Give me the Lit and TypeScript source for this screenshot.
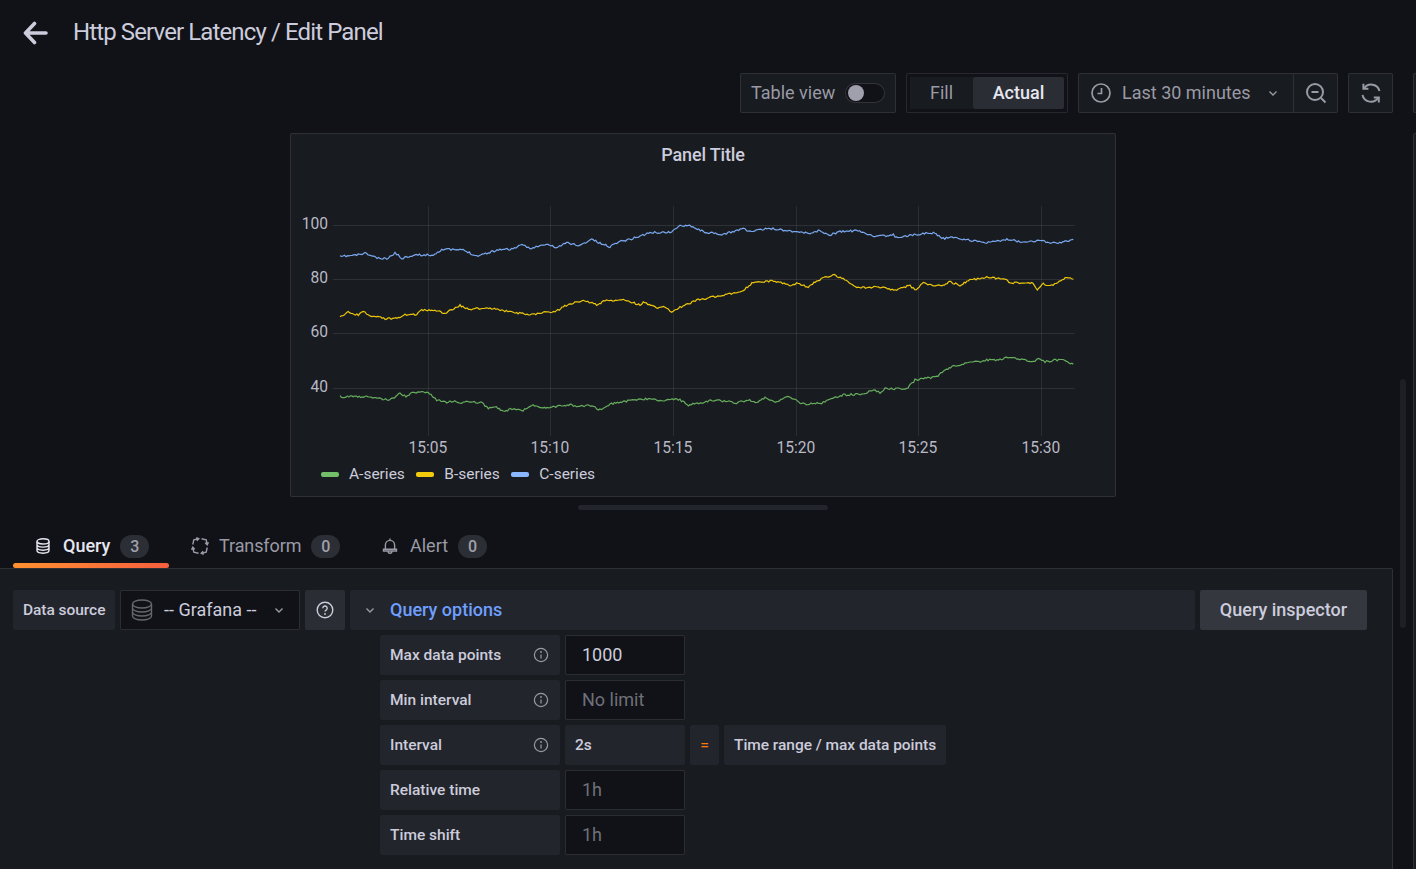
import {LitElement, html, css, svg} from 'lit';
import {customElement} from 'lit/decorators.js';

type Pt = [number, number];

// traced from the reference in page pixels, the chart svg uses the same coordinates
const fromZoom = (ox: number, pts: number[][]): Pt[] => pts.map(([x, y]) => [ox + x / 3, 200 + y / 3]);

const BLUE: Pt[] = [
    ...fromZoom(290, [[150,170],[200,165],[225,160],[270,177],[295,175],[315,158],[335,175],[370,165],[430,165],[455,148],[520,150],[560,168],[630,148],[660,148],[700,135],[720,145],[770,133],[800,143],[830,128],[870,137],[905,117],[930,130],[960,140],[985,125],[1020,118],[1050,108],[1080,98],[1140,97],[1160,85]]),
    ...fromZoom(680, [[0,78],[25,74],[70,95],[125,105],[190,85],[210,95],[270,85],[350,95],[390,100],[415,92],[450,105],[480,95],[530,92],[590,110],[640,105],[650,112],[720,102],[760,98],[790,115],[825,112],[860,120],[925,128],[985,118],[1020,125],[1075,122],[1130,130],[1180,118]]),
];
const YELLOW: Pt[] = [
    ...fromZoom(290, [[150,353],[175,337],[205,345],[220,335],[240,347],[290,357],[330,352],[345,343],[375,345],[395,330],[430,330],[465,340],[510,317],[540,327],[600,325],[680,338],[720,345],[760,336],[795,335],[820,320],[850,308],[880,300],[920,315],[945,303],[1000,297],[1020,305],[1050,315],[1060,305],[1095,322],[1125,322],[1145,337]]),
    ...fromZoom(680, [[0,322],[50,300],[145,283],[190,270],[220,247],[285,243],[330,258],[350,250],[385,262],[410,242],[458,224],[490,235],[530,262],[600,262],[650,270],[690,256],[705,270],[730,250],[785,258],[810,245],[840,257],[865,240],[925,232],[965,235],[995,248],[1055,248],[1072,268],[1090,252],[1115,256],[1160,232],[1180,238]]),
];
const GREEN: Pt[] = [
    ...fromZoom(290, [[150,590],[230,590],[300,600],[330,580],[348,590],[370,577],[415,578],[440,600],[470,607],[490,603],[515,610],[535,603],[575,608],[595,624],[615,620],[640,634],[670,625],[695,633],[725,615],[750,623],[780,623],[810,618],[840,615],[860,620],[905,616],[925,630],[960,612],[1000,605],[1040,598],[1080,597],[1110,603],[1160,597]]),
    ...fromZoom(680, [[0,600],[25,615],[105,600],[170,608],[205,600],[230,610],[255,593],[290,607],[315,590],[340,595],[365,612],[425,610],[440,600],[490,585],[550,582],[580,570],[600,577],[615,566],[680,566],[705,540],[735,535],[770,530],[795,510],[825,497],[855,490],[875,484],[905,487],[920,480],[960,480],[975,471],[1010,477],[1060,485],[1075,477],[1095,485],[1145,478],[1180,493]]),
];

function seriesPath(pts: Pt[], seed: number) {
    let s = seed;
    const rnd = () => {
        s = (s * 16807) % 2147483647;
        return s / 2147483647 - 0.5;
    };
    const out: string[] = [];
    for (let i = 0; i < pts.length - 1; i++) {
        const [x0, y0] = pts[i];
        const [x1, y1] = pts[i + 1];
        const steps = Math.max(1, Math.round((x1 - x0) / 1.5));
        for (let k = 0; k < steps; k++) {
            const t = k / steps;
            const y = y0 + (y1 - y0) * t + rnd() * 2;
            out.push(`${(x0 + (x1 - x0) * t).toFixed(1)},${y.toFixed(1)}`);
        }
    }
    const [lx, ly] = pts[pts.length - 1];
    out.push(`${lx.toFixed(1)},${ly.toFixed(1)}`);
    return 'M' + out.join('L');
}

const X_TICKS: [number, string][] = [[428.5, '15:05'], [550.5, '15:10'], [673.5, '15:15'], [796.5, '15:20'], [918.5, '15:25'], [1041.5, '15:30']];
const Y_TICKS: [number, string][] = [[225, '100'], [279, '80'], [333, '60'], [388, '40']];

const dbIcon = html`<svg class="ic" viewBox="0 0 16 16"><g fill="none" stroke="currentColor" stroke-width="1.4"><ellipse cx="8" cy="3.4" rx="6" ry="2.6"/><path d="M2 3.4v9.2C2 14 4.7 15.2 8 15.2s6-1.2 6-2.6V3.4M2 6.5c0 1.4 2.7 2.6 6 2.6s6-1.2 6-2.6M2 9.6c0 1.4 2.7 2.6 6 2.6s6-1.2 6-2.6"/></g></svg>`;
const transformIcon = html`<svg class="ic wide" viewBox="0 0 18 18"><g fill="none" stroke="currentColor" stroke-width="1.4"><path d="M1.8 7.5L2.8 2.8 7.5 1.8M5.3.6l2.5 1.2-2 2"/><path d="M10.5 1.800l4.700 1 1 4.700M17.400 5.300l-1.200 2.500-2-2"/><path d="M16.200 10.500l-1 4.700-4.700 1M12.700 17.400l-2.500-1.200 2-2"/><path d="M7.500 16.200l-4.700-1-1-4.700M.6 12.700l1.200-2.500 2 2"/></g></svg>`;
const bellIcon = html`<svg class="ic" viewBox="0 0 16 16"><g fill="none" stroke="currentColor" stroke-width="1.4"><path d="M8 .6v1.800M3.400 11V7a4.600 4.600 0 0 1 9.200 0v4M1.500 11.200h13v1.800h-13zM6 13c0 1.200.9 2.300 2 2.300s2-1.100 2-2.300"/></g></svg>`;
const infoIcon = html`<svg class="ic-info" viewBox="0 0 16 16"><g fill="none" stroke="currentColor" stroke-width="1.2"><circle cx="8" cy="8" r="6.6"/><path d="M8 7.400v4"/></g><circle cx="8" cy="5" r=".9" fill="currentColor"/></svg>`;
const chevron = html`<svg class="chev" viewBox="0 0 12 12"><path d="M2.500 4.500L6 8l3.500-3.500" fill="none" stroke="currentColor" stroke-width="1.4"/></svg>`;

@customElement('app-root')
export class AppRoot extends LitElement {
    static styles = css`
        :host {
            display: block;
            width: 1416px;
            height: 869px;
            position: relative;
            overflow: hidden;
            background: #111217;
            color: #ccccdc;
            font-family: Roboto, "Liberation Sans", sans-serif;
        }

        .head {
            display: flex;
            align-items: center;
            height: 65px;
            padding-left: 23px;
        }

        .back {
            width: 25px;
            height: 24px;
            margin-right: 25px;
        }

        .head h1 {
            margin: 0 0 2px;
            font-size: 24px;
            font-weight: 400;
            letter-spacing: -0.88px;
        }

        .tx {
            margin-bottom: 2px;
        }

        .toolbar {
            display: flex;
            gap: 10px;
            height: 40px;
            margin: 8px 0 20px 740px;
            width: 800px;
            color: #9a9aa6;
            font-size: 18px;
        }

        .box {
            display: flex;
            flex: none;
            align-items: center;
            box-sizing: border-box;
            background: #181b1f;
            border: 1px solid rgba(204, 204, 220, 0.12);
            border-radius: 2px;
        }

        .tableview {
            width: 156px;
            padding-left: 10px;
        }

        .switch {
            position: relative;
            box-sizing: border-box;
            width: 40px;
            height: 20px;
            margin-left: 10px;
            background: #111217;
            border: 1px solid rgba(204, 204, 220, 0.18);
            border-radius: 10px;
        }

        .switch::after {
            content: "";
            position: absolute;
            left: 2px;
            top: 1px;
            width: 16px;
            height: 16px;
            border-radius: 50%;
            background: #9fa0ab;
        }

        .radio {
            width: 162px;
            padding: 3px;
            background: #111217;
        }

        .radio span {
            display: flex;
            align-items: center;
            justify-content: center;
            box-sizing: border-box;
            height: 32px;
            padding-bottom: 2px;
        }

        .fill {
            width: 63px;
            background: #181b1f;
        }

        .actual {
            width: 91px;
            background: #2a2d33;
            border-radius: 2px;
            color: #e6e6f0;
            font-weight: 500;
        }

        .timegroup {
            width: 260px;
        }

        .range {
            display: flex;
            align-items: center;
            flex: none;
            width: 215px;
            height: 100%;
            padding-left: 12px;
            box-sizing: border-box;
            border-right: 1px solid rgba(204, 204, 220, 0.12);
        }

        .range .clock {
            flex: none;
            width: 20px;
            height: 20px;
            margin-right: 11px;
        }

        .range .chev {
            width: 12px;
            height: 12px;
            margin-left: 16px;
        }

        .tool-ic {
            width: 22px;
            height: 22px;
            margin: auto;
        }

        .refresh {
            width: 45px;
        }

        .stub {
            width: 40px;
            margin-left: 10px;
        }

        .body {
            display: flex;
        }

        .main {
            flex: none;
            width: 1393px;
        }

        .side {
            flex: none;
            box-sizing: border-box;
            width: 100px;
            height: 760px;
            margin-left: 20px;
            background: #181b1f;
            border: 1px solid rgba(204, 204, 220, 0.12);
            border-radius: 2px;
        }

        .panel {
            display: flex;
            flex-direction: column;
            box-sizing: border-box;
            width: 826px;
            height: 364px;
            margin-left: 290px;
            background: #181b1f;
            border: 1px solid rgba(204, 204, 220, 0.12);
            border-radius: 2px;
        }

        .panel-title {
            height: 66px;
            padding-top: 9px;
            box-sizing: border-box;
            text-align: center;
            font-size: 18px;
            line-height: 24px;
            font-weight: 500;
            letter-spacing: -0.15px;
        }

        .chart {
            display: block;
            flex: none;
        }

        .chart text {
            font-size: 15.6px;
            fill: #b9b9c6;
        }

        .legend {
            display: flex;
            align-items: center;
            gap: 11.5px;
            padding: 5px 0 0 30px;
            font-size: 15.5px;
            line-height: 18px;
        }

        .legend div {
            display: flex;
            align-items: center;
            gap: 10px;
        }

        .legend i {
            width: 18px;
            height: 5px;
            border-radius: 2px;
        }

        .handle {
            width: 250px;
            height: 5px;
            margin: 8px 0 0 578px;
            background: #22252b;
            border-radius: 3px;
        }

        .tabs {
            display: flex;
            height: 58px;
            padding-left: 13px;
            box-sizing: border-box;
            align-items: flex-end;
        }

        .tab {
            position: relative;
            display: flex;
            flex: none;
            align-items: center;
            height: 38px;
            padding: 0 0 7px 22px;
            box-sizing: border-box;
            font-size: 18px;
            color: #9a9aa6;
        }

        .tab.active {
            width: 156px;
            color: #e6e6f0;
            font-weight: 500;
        }

        .tab.mid {
            width: 191px;
            letter-spacing: -0.1px;
        }

        .tab.active::after {
            content: "";
            position: absolute;
            left: 0;
            right: 0;
            bottom: 0;
            height: 5px;
            border-radius: 3px;
            background: linear-gradient(90deg, #ff9030, #f55f3e);
        }

        .ic {
            flex: none;
            width: 16px;
            height: 16px;
            margin-right: 12px;
        }

        .ic.wide {
            width: 18px;
            height: 18px;
            margin-right: 10px;
        }

        .badge {
            display: flex;
            align-items: center;
            justify-content: center;
            width: 29px;
            height: 23px;
            margin: 2px 0 0 10px;
            border-radius: 12px;
            background: #2b2e34;
            color: #a0a0ac;
            font-size: 16px;
            font-weight: 500;
        }

        .editor {
            box-sizing: border-box;
            height: 320px;
            padding: 21px 25px 0 13px;
            background: #181b1f;
            border: solid rgba(204, 204, 220, 0.12);
            border-width: 1px 1px 0 0;
            border-radius: 0 2px 0 0;
        }

        .row {
            display: flex;
            gap: 5px;
            height: 40px;
        }

        .rows {
            display: flex;
            flex-direction: column;
            gap: 5px;
            margin: 5px 0 0 367px;
        }

        .cell {
            display: flex;
            flex: none;
            align-items: center;
            box-sizing: border-box;
            padding: 0 10px;
            background: #22252b;
            border-radius: 2px;
            font-size: 15.5px;
            font-weight: 500;
            white-space: nowrap;
        }

        .ds-label {
            width: 102px;
            letter-spacing: -0.05px;
        }

        .select {
            width: 180px;
            padding: 0 14px 0 10px;
            background: #111217;
            border: 1px solid rgba(204, 204, 220, 0.15);
            font-size: 18px;
            font-weight: 400;
        }

        .select .stack {
            flex: none;
            width: 22px;
            height: 22px;
            margin-right: 11px;
            color: #66666c;
        }

        .select .chev {
            width: 12px;
            height: 12px;
            margin-left: auto;
            color: #9a9aa6;
        }

        .help {
            justify-content: center;
            width: 40px;
            padding: 0;
            background: #2a2d33;
        }

        .help svg {
            width: 18px;
            height: 18px;
        }

        .options {
            flex: 1;
            padding-left: 14px;
            color: #6e9fff;
            font-size: 18px;
        }

        .options .chev {
            width: 12px;
            height: 12px;
            margin-right: 14px;
            color: #9a9aa6;
        }

        .inspector {
            justify-content: center;
            width: 167px;
            padding: 0 0 2px;
            background: #34373e;
            font-size: 18px;
        }

        .label {
            justify-content: space-between;
            width: 180px;
            padding-right: 11px;
        }

        .ic-info {
            width: 16px;
            height: 16px;
            color: #9a9aa6;
        }

        .input {
            width: 120px;
            padding: 0 16px 2px;
            background: #111217;
            border: 1px solid rgba(204, 204, 220, 0.15);
            font-size: 18px;
            font-weight: 400;
        }

        .input.empty {
            color: #6f7079;
        }

        .static {
            width: 120px;
        }

        .eq {
            justify-content: center;
            width: 29px;
            padding: 0;
            color: #ff780a;
        }

        .calc {
            letter-spacing: -0.04px;
        }

        .scroll {
            position: absolute;
            left: 1400px;
            top: 379px;
            width: 6px;
            height: 249px;
            border-radius: 3px;
            background: #1c1f24;
        }
    `;

    renderChart() {
        return html`
            <svg class="chart" width="824" height="260" viewBox="291 200 824 260">
                ${Y_TICKS.map(([y, label]) => svg`
                    <path d="M333 ${y + 0.5}H1074.5" stroke="rgba(204,204,220,.12)"/>
                    <text x="328" y=${y + 4} text-anchor="end">${label}</text>
                `)}
                ${X_TICKS.map(([x, label]) => svg`
                    <path d="M${x} 206V436" stroke="rgba(204,204,220,.1)"/>
                    <text x=${x - 0.7} y="453" text-anchor="middle">${label}</text>
                `)}
                <path d=${seriesPath(BLUE, 11)} fill="none" stroke="#7aa8f0" stroke-width="1.2"/>
                <path d=${seriesPath(YELLOW, 23)} fill="none" stroke="#ecc60c" stroke-width="1.2"/>
                <path d=${seriesPath(GREEN, 37)} fill="none" stroke="#66ad5e" stroke-width="1.2"/>
            </svg>
        `;
    }

    render() {
        return html`
            <div class="head">
                <svg class="back" viewBox="0 0 25 24"><path d="M23 12H3M11.5 2.5L2.5 12l9 9.5" fill="none" stroke="#ccccdc" stroke-width="3.6" stroke-linecap="round" stroke-linejoin="round"/></svg>
                <h1>Http Server Latency / Edit Panel</h1>
            </div>

            <div class="toolbar">
                <div class="box tableview"><span class="tx">Table view</span><span class="switch"></span></div>
                <div class="box radio"><span class="fill">Fill</span><span class="actual">Actual</span></div>
                <div class="box timegroup">
                    <div class="range">
                        <svg class="clock" viewBox="0 0 20 20"><g fill="none" stroke="currentColor" stroke-width="1.7"><circle cx="10" cy="10" r="9"/><path d="M10.5 5v5.5H6.5"/></g></svg>
                        <span class="tx">Last 30 minutes</span> ${chevron}
                    </div>
                    <svg class="tool-ic" viewBox="0 0 22 22"><g fill="none" stroke="currentColor" stroke-width="2"><circle cx="10" cy="10" r="8"/><path d="M16 16l4.5 4.5M6.5 10h7"/></g></svg>
                </div>
                <div class="box refresh">
                    <svg class="tool-ic" viewBox="0 0 22 22"><g fill="none" stroke="currentColor" stroke-width="2"><path d="M2.5 13a8.6 8.6 0 0 0 15.8 2.5M19.5 9A8.6 8.6 0 0 0 4.2 6.2"/><path d="M3.4 1.8v5h5M18.8 20.5v-5h-5"/></g></svg>
                </div>
                <div class="box stub"></div>
            </div>

            <div class="body">
                <div class="main">
                    <div class="panel">
                        <div class="panel-title">Panel Title</div>
                        ${this.renderChart()}
                        <div class="legend">
                            <div><i style="background:#73bf69"></i>A-series</div>
                            <div><i style="background:#f2cc0c"></i>B-series</div>
                            <div><i style="background:#8ab8ff"></i>C-series</div>
                        </div>
                    </div>
                    <div class="handle"></div>

                    <div class="tabs">
                        <div class="tab active">${dbIcon}Query<span class="badge">3</span></div>
                        <div class="tab mid">${transformIcon}Transform<span class="badge">0</span></div>
                        <div class="tab">${bellIcon}Alert<span class="badge">0</span></div>
                    </div>

                    <div class="editor">
                        <div class="row">
                            <div class="cell ds-label">Data source</div>
                            <div class="cell select">
                                <svg class="stack" viewBox="0 0 22 22"><g fill="none" stroke="currentColor" stroke-width="1.4"><ellipse cx="11" cy="5" rx="9.5" ry="4"/><path d="M1.5 5v12c0 2.2 4.3 4 9.5 4s9.5-1.8 9.5-4V5M1.5 9c0 2.2 4.3 4 9.5 4s9.5-1.8 9.5-4M1.5 13c0 2.2 4.3 4 9.5 4s9.5-1.8 9.5-4"/></g></svg>
                                <span class="tx">-- Grafana --</span> ${chevron}
                            </div>
                            <div class="cell help">
                                <svg viewBox="0 0 18 18"><g fill="none" stroke="currentColor" stroke-width="1.4"><circle cx="9" cy="9" r="7.8"/><path d="M6.8 7.2a2.2 2.2 0 1 1 3.3 1.9c-.7.4-1.1.8-1.1 1.5"/></g><circle cx="9" cy="13" r=".9" fill="currentColor"/></svg>
                            </div>
                            <div class="cell options">${chevron}<span class="tx">Query options</span></div>
                            <div class="cell inspector">Query inspector</div>
                        </div>
                        <div class="rows">
                            <div class="row">
                                <div class="cell label">Max data points ${infoIcon}</div>
                                <div class="cell input">1000</div>
                            </div>
                            <div class="row">
                                <div class="cell label">Min interval ${infoIcon}</div>
                                <div class="cell input empty">No limit</div>
                            </div>
                            <div class="row">
                                <div class="cell label">Interval ${infoIcon}</div>
                                <div class="cell static">2s</div>
                                <div class="cell eq">=</div>
                                <div class="cell calc">Time range / max data points</div>
                            </div>
                            <div class="row">
                                <div class="cell label">Relative time</div>
                                <div class="cell input empty">1h</div>
                            </div>
                            <div class="row">
                                <div class="cell label">Time shift</div>
                                <div class="cell input empty">1h</div>
                            </div>
                        </div>
                    </div>
                </div>
                <div class="side"></div>
            </div>
            <div class="scroll"></div>
        `;
    }
}
